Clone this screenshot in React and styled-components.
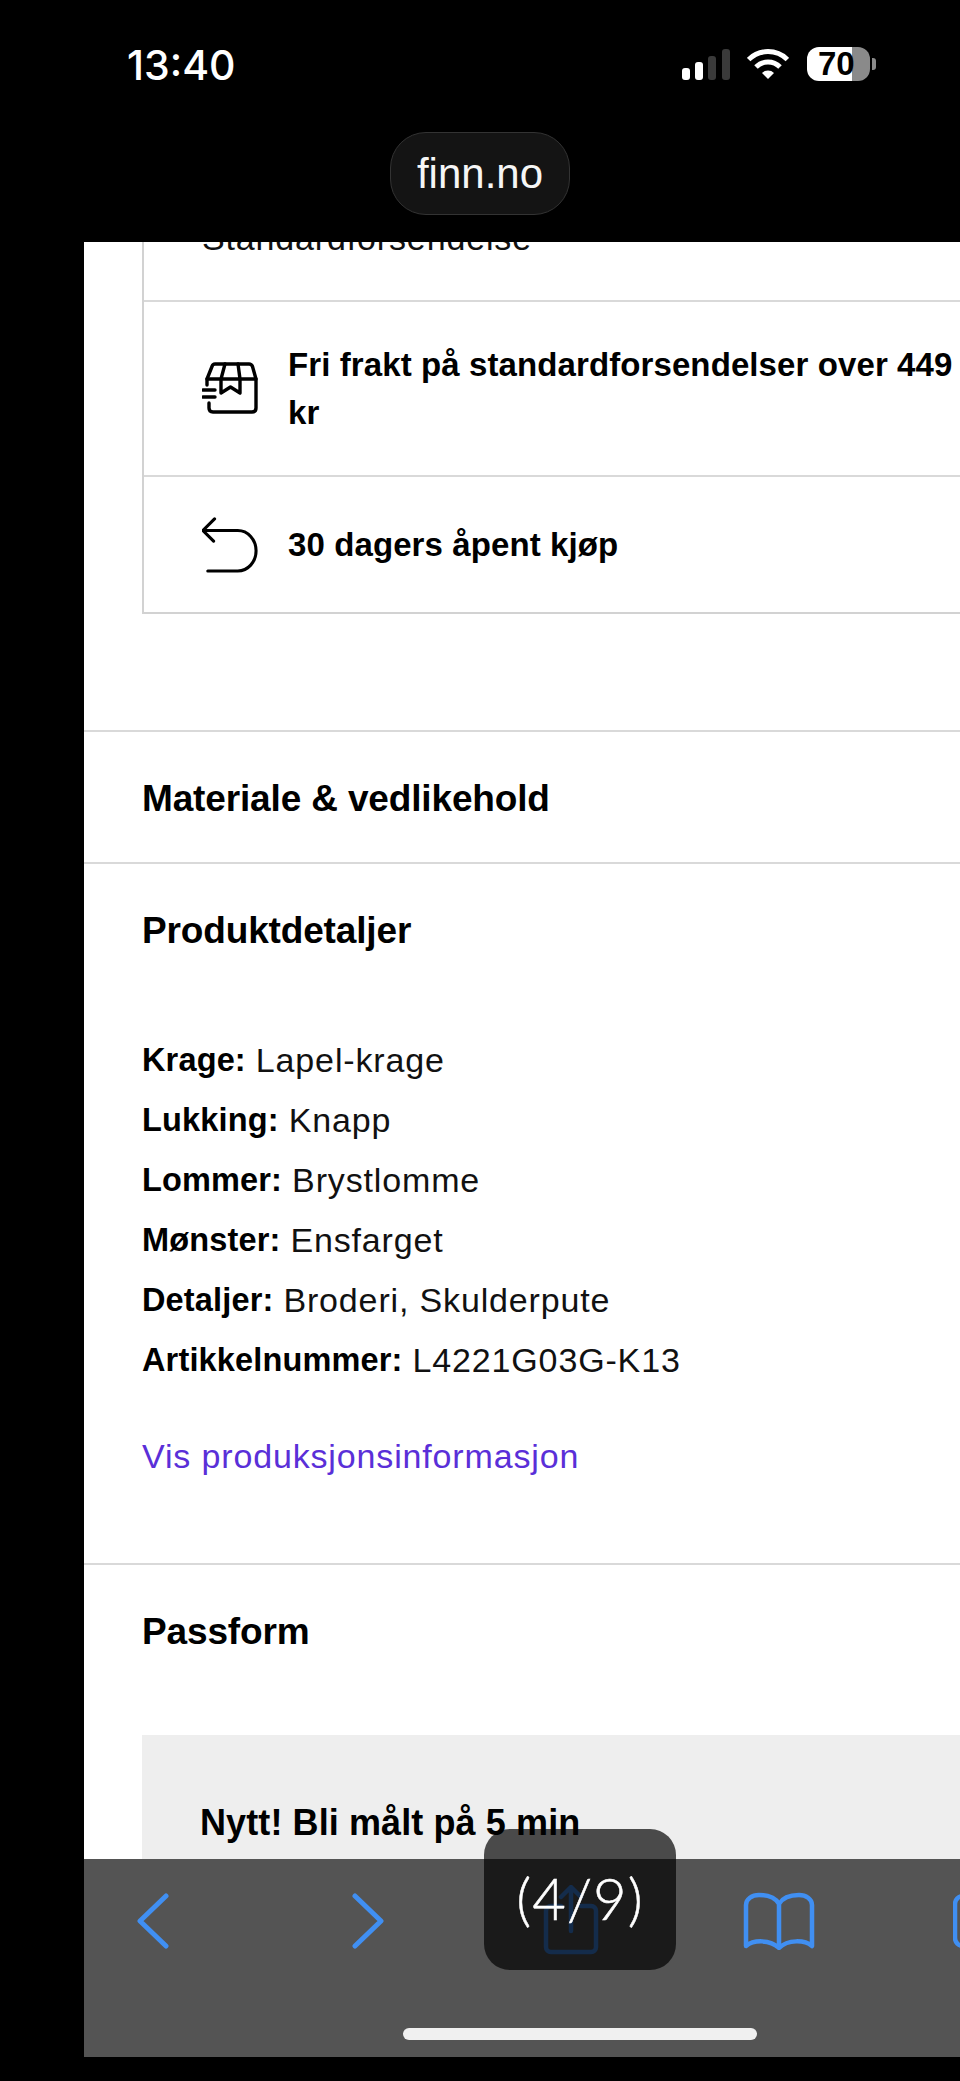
import React from "react";
import styled, { createGlobalStyle } from "styled-components";

const Global = createGlobalStyle`
  html, body { margin: 0; padding: 0; background: #000; }
  body { width: 960px; height: 2081px; overflow: hidden; font-family: "Liberation Sans", Arial, sans-serif; }
`;

const Phone = styled.div`
  width: 960px; height: 2081px; background: #000; display: flex; flex-direction: column; overflow: hidden;
`;
const TopChrome = styled.header`
  height: 242px; flex: none; display: flex; flex-direction: column; align-items: center; color: #fff;
`;
const StatusBar = styled.div`
  width: 100%; box-sizing: border-box; height: 132px; padding: 47px 84px 0 127px;
  display: flex; justify-content: space-between; align-items: flex-start;
`;
const Time = styled.div`
  font: 500 41px/36px "Inter", "Liberation Sans", sans-serif;
`;
const StatusIcons = styled.div` display: flex; align-items: center; height: 34px; width: 196px; `;
const WifiIcon = styled.svg` margin-left: 15px; `;
const Battery = styled.div`
  position: relative; margin-left: 18px; width: 63px; height: 34px; border-radius: 12px;
  background: linear-gradient(90deg, #fff 0 45px, #8a8a8a 45px);
  color: #000; font: 700 33px/34px "Liberation Sans", sans-serif; padding-left: 11px; box-sizing: border-box;
  &::after {
    content: ""; position: absolute; right: -6px; top: 11px; width: 4px; height: 12px;
    border-radius: 0 3px 3px 0; background: #8a8a8a;
  }
`;
const AddressPill = styled.div`
  width: 180px; height: 83px; box-sizing: border-box; border-radius: 36px; background: #141414; border: 1px solid #333;
  display: flex; align-items: center; justify-content: center; font-size: 42px; color: #f6f6f6;
`;
const Viewport = styled.main`
  position: relative; flex: none; margin-left: 84px; width: 876px; height: 1815px; background: #fff; overflow: hidden; color: #000;
`;
const Content = styled.div` width: 1100px; `;
const InfoBox = styled.section`
  margin: -60px 0 0 58px; border: 2px solid #d2d2d2; width: 1000px;
`;
const InfoRow = styled.div`
  display: flex; align-items: ${p => p.$top ? "flex-start" : "center"}; gap: 30px; padding-left: 58px; box-sizing: border-box;
  height: ${p => p.$h}px; border-top: ${p => p.$first ? "none" : "2px solid #d9d9d9"};
`;
const Clipped = styled.div`
  font-size: 34px; line-height: 36px; padding-top: 36px; letter-spacing: 0.85px; color: #111;
`;
const IconSlot = styled.div` width: 56px; flex: none; display: flex; justify-content: center; `;
const RowText = styled.div`
  font-size: 33px; font-weight: 700; line-height: 48px; width: 680px; letter-spacing: 0.1px; color: #000;
`;
const Accordion = styled.section`
  border-top: 2px solid #d9d9d9; padding: 0 0 0 58px; box-sizing: border-box; height: ${p => p.$h}px;
  margin-top: ${p => p.$mt || 0}px;
`;
const Heading = styled.h2`
  margin: 0; padding-top: 45px; font-size: 37px; line-height: 44px; font-weight: 700; color: #000; letter-spacing: -0.15px;
`;
const SpecList = styled.dl` margin: 77px 0 0; `;
const SpecRow = styled.div`
  height: 60px; display: flex; gap: 10px; align-items: center; font-size: 34px; letter-spacing: 0.85px;
`;
const SpecKey = styled.dt` font-size: 32.5px; font-weight: 700; letter-spacing: 0.15px; `;
const SpecValue = styled.dd` margin: 0; color: #111; `;
const PlainLink = styled.a`
  display: block; margin-top: 46px; font-size: 34px; color: #5a2fd8; letter-spacing: 0.85px; line-height: 40px;
`;
const Promo = styled.div`
  margin-top: 81px; background: #eee; height: 180px; box-sizing: border-box; padding: 68px 0 0 58px;
  font-size: 36px; font-weight: 700; line-height: 40px; letter-spacing: 0.1px;
`;
const Toolbar = styled.nav`
  position: absolute; left: 0; right: 0; bottom: 0; height: 198px; background: #545454;
`;
const ToolIcons = styled.div`
  display: flex; height: 124px; align-items: center; padding-left: 53px;
`;
const ToolSlot = styled.div` width: ${p => p.$w}px; flex: none; display: flex; align-items: center; `;
const HomeBar = styled.div`
  position: absolute; left: 319px; bottom: 17px; width: 354px; height: 12px; border-radius: 6px; background: #f0f0f0;
`;
const Toast = styled.div`
  position: absolute; left: 400px; top: 1587px; width: 192px; height: 141px; border-radius: 26px; background: rgba(0,0,0,.69);
  display: flex; align-items: center; justify-content: center; padding-bottom: 4px; box-sizing: border-box;
  font: 300 58px/60px "Lato", "Open Sans", sans-serif; letter-spacing: 1px; color: #fff; -webkit-text-stroke: 0.5px #fff;
`;
const Bottom = styled.div` flex: 1; `;

const BLUE = "#408ff2";

const Box = () => (
  <svg width="56" height="54" viewBox="0 0 56 54" fill="none" stroke="#000" strokeWidth="3.4" strokeLinecap="round" strokeLinejoin="round">
    <path d="M5 23V17L10 4.5Q10.8 2 13 2H47Q49.5 2 50.5 4.5L54 17V46Q54 50 50 50H11Q7 50 7 46V41" />
    <path d="M5 17H54M23 2 19 17M36 2l2 15M19 17V31l9.5-6 9.5 6V17" />
    <path d="M1 28H13M1 35H13" />
  </svg>
);
const Return = () => (
  <svg width="58" height="58" viewBox="0 0 58 58" fill="none" stroke="#000" strokeWidth="3.2" strokeLinecap="round" strokeLinejoin="round">
    <path d="M13 2 1 14l11 11M2 14h35a19 21 0 0 1 0 42H6" />
  </svg>
);
const Chevron = ({ flip }) => (
  <svg width="32" height="56" viewBox="0 0 32 56" fill="none" stroke={BLUE} strokeWidth="5" strokeLinecap="round" strokeLinejoin="round">
    <path d={flip ? "M3 3 29 28 3 53" : "M29 3 3 28 29 53"} />
  </svg>
);
const Share = () => (
  <svg width="58" height="72" viewBox="0 0 58 72" fill="none" stroke={BLUE} strokeWidth="4.5" strokeLinecap="round" strokeLinejoin="round">
    <path d="M18 21H8a5 5 0 0 0-5 5v36a5 5 0 0 0 5 5h40a5 5 0 0 0 5-5V26a5 5 0 0 0-5-5H38" />
    <path d="M28 46V3M18 12 28 2l10 10" />
  </svg>
);
const Book = () => (
  <svg width="72" height="58" viewBox="0 0 72 58" fill="none" stroke={BLUE} strokeWidth="4.5" strokeLinecap="round" strokeLinejoin="round">
    <path d="M36 12C32 5 24 3 16 3 9 3 3 7 3 13V54C10 48 27 47 36 56 45 47 62 48 69 54V13C69 7 63 3 56 3 48 3 40 5 36 12V55" />
  </svg>
);
const Tabs = () => (
  <svg width="60" height="54" viewBox="0 0 60 54" fill="none" stroke={BLUE} strokeWidth="4.5" strokeLinecap="round" strokeLinejoin="round">
    <rect x="2" y="2" width="50" height="50" rx="8" />
  </svg>
);

export default function App() {
  return (
    <Phone>
      <Global />
      <TopChrome>
        <StatusBar>
          <Time>13:40</Time>
          <StatusIcons>
            <svg width="52" height="34" viewBox="0 0 52 34">
              <rect x="2" y="21" width="8" height="12" rx="3" fill="#fff" />
              <rect x="15" y="15" width="8" height="18" rx="3" fill="#fff" />
              <rect x="28" y="9" width="8" height="24" rx="3" fill="#3a3a3a" />
              <rect x="42" y="2" width="8" height="31" rx="3" fill="#3a3a3a" />
            </svg>
            <WifiIcon width="42" height="31" viewBox="0 0 42 31" fill="none" stroke="#fff" strokeWidth="5">
              <path d="M1.6 10.6A27.5 27.5 0 0 1 40.4 10.6" />
              <path d="M9 18A17 17 0 0 1 33 18" />
              <path d="M21 30 15 24A8.5 8.5 0 0 1 27 24Z" fill="#fff" stroke="none" />
            </WifiIcon>
            <Battery>70</Battery>
          </StatusIcons>
        </StatusBar>
        <AddressPill>finn.no</AddressPill>
      </TopChrome>
      <Viewport>
        <Content>
          <InfoBox>
            <InfoRow $first $h={116} $top><Clipped>Standardforsendelse</Clipped></InfoRow>
            <InfoRow $h={175}><IconSlot><Box /></IconSlot><RowText>Fri frakt på standardforsendelser over 449 kr</RowText></InfoRow>
            <InfoRow $h={137}><IconSlot><Return /></IconSlot><RowText>30 dagers åpent kjøp</RowText></InfoRow>
          </InfoBox>
          <Accordion $h={132} $mt={116}><Heading>Materiale &amp; vedlikehold</Heading></Accordion>
          <Accordion $h={701}>
            <Heading>Produktdetaljer</Heading>
            <SpecList>
              <SpecRow><SpecKey>Krage:</SpecKey><SpecValue>Lapel-krage</SpecValue></SpecRow>
              <SpecRow><SpecKey>Lukking:</SpecKey><SpecValue>Knapp</SpecValue></SpecRow>
              <SpecRow><SpecKey>Lommer:</SpecKey><SpecValue>Brystlomme</SpecValue></SpecRow>
              <SpecRow><SpecKey>Mønster:</SpecKey><SpecValue>Ensfarget</SpecValue></SpecRow>
              <SpecRow><SpecKey>Detaljer:</SpecKey><SpecValue>Broderi, Skulderpute</SpecValue></SpecRow>
              <SpecRow><SpecKey>Artikkelnummer:</SpecKey><SpecValue>L4221G03G-K13</SpecValue></SpecRow>
            </SpecList>
            <PlainLink>Vis produksjonsinformasjon</PlainLink>
          </Accordion>
          <Accordion $h={320}>
            <Heading>Passform</Heading>
            <Promo>Nytt! Bli målt på 5 min</Promo>
          </Accordion>
        </Content>
        <Toolbar>
          <ToolIcons>
            <ToolSlot $w={215}><Chevron /></ToolSlot>
            <ToolSlot $w={191}><Chevron flip /></ToolSlot>
            <ToolSlot $w={200}><Share /></ToolSlot>
            <ToolSlot $w={210}><Book /></ToolSlot>
            <ToolSlot $w={60}><Tabs /></ToolSlot>
          </ToolIcons>
          <HomeBar />
        </Toolbar>
        <Toast>(4/9)</Toast>
      </Viewport>
      <Bottom />
    </Phone>
  );
}
